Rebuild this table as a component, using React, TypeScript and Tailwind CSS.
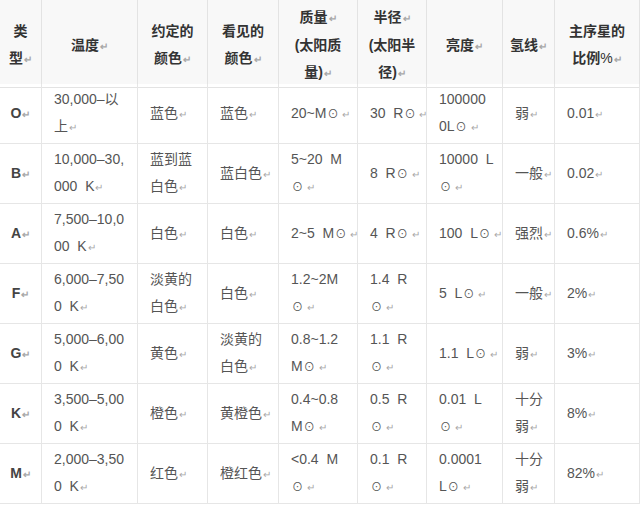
import React from 'react'

const cols = 'grid grid-cols-[42px_96px_70px_71px_79px_69px_76px_52px_85px]'

const header: string[][] = [
  ['类', '型'],
  ['温度'],
  ['约定的', '颜色'],
  ['看见的', '颜色'],
  ['质量↵', '(太阳质', '量)'],
  ['半径↵', '(太阳半', '径)'],
  ['亮度'],
  ['氢线'],
  ['主序星的', '比例%'],
]

const rows: string[][][] = [
  [['O'], ['30,000–以', '上'], ['蓝色'], ['蓝色'], ['20~M⊙'], ['30 R⊙'], ['100000', '0L⊙'], ['弱'], ['0.01']],
  [['B'], ['10,000–30,', '000 K'], ['蓝到蓝', '白色'], ['蓝白色'], ['5~20 M', '⊙'], ['8 R⊙'], ['10000 L', '⊙'], ['一般'], ['0.02']],
  [['A'], ['7,500–10,0', '00 K'], ['白色'], ['白色'], ['2~5 M⊙'], ['4 R⊙'], ['100 L⊙'], ['强烈'], ['0.6%']],
  [['F'], ['6,000–7,50', '0 K'], ['淡黄的', '白色'], ['白色'], ['1.2~2M', '⊙'], ['1.4 R', '⊙'], ['5 L⊙'], ['一般'], ['2%']],
  [['G'], ['5,000–6,00', '0 K'], ['黄色'], ['淡黄的', '白色'], ['0.8~1.2', 'M⊙'], ['1.1 R', '⊙'], ['1.1 L⊙'], ['弱'], ['3%']],
  [['K'], ['3,500–5,00', '0 K'], ['橙色'], ['黄橙色'], ['0.4~0.8', 'M⊙'], ['0.5 R', '⊙'], ['0.01 L', '⊙'], ['十分', '弱'], ['8%']],
  [['M'], ['2,000–3,50', '0 K'], ['红色'], ['橙红色'], ['<0.4 M', '⊙'], ['0.1 R', '⊙'], ['0.0001', 'L⊙'], ['十分', '弱'], ['82%']],
]

function Mark({ gap }: { gap: boolean }) {
  return <span className={`${gap ? 'ml-[4px]' : 'ml-px'} text-[10px] text-[#a8a8a8]`}>↵</span>
}

// one line of text, the paragraph mark drawn lighter
function Line({ text, last }: { text: string; last: boolean }) {
  const marked = text.endsWith('↵')
  const body = (marked ? text.slice(0, -1) : text).replace(/ /g, '  ')
  return (
    <div className="whitespace-pre">
      {body.split(/(⊙|%)/).map((part, i) =>
        part === '⊙' ? (
          <span key={i} className="ml-px text-[11px] font-normal">⊙</span>
        ) : part === '%' ? (
          <span key={i} className="font-normal">%</span>
        ) : (
          <span key={i}>{part}</span>
        )
      )}
      {(marked || last) && <Mark gap={body.endsWith('⊙')} />}
    </div>
  )
}

export default function App() {
  return (
    <div
      className="w-[640px] h-[508px] overflow-hidden bg-white text-[14px] leading-[27px] text-[#555]"
      style={{ fontFamily: '"Liberation Sans", "Noto Sans CJK SC", sans-serif' }}
    >
      <div className={`${cols} h-[84px] bg-[#f8f8f8]`}>
        {header.map((lines, i) => (
          <div
            key={i}
            className="flex flex-col items-center justify-center border-r border-b border-[#e3e3e3] pt-[4px] text-center font-bold text-[#333]"
          >
            {lines.map((l, j) => (
              <Line key={j} text={l} last={j === lines.length - 1} />
            ))}
          </div>
        ))}
      </div>
      {rows.map((row, r) => (
        <div key={r} className={`${cols} h-[60px]`}>
          {row.map((lines, i) => (
            <div
              key={i}
              className={`flex flex-col justify-center border-r border-b border-[#e6e6e6] ${
                i === 0 ? 'items-center font-bold text-[#444]' : 'pl-[12px]'
              }`}
            >
              {lines.map((l, j) => (
                <Line key={j} text={l} last={j === lines.length - 1} />
              ))}
            </div>
          ))}
        </div>
      ))}
    </div>
  )
}
